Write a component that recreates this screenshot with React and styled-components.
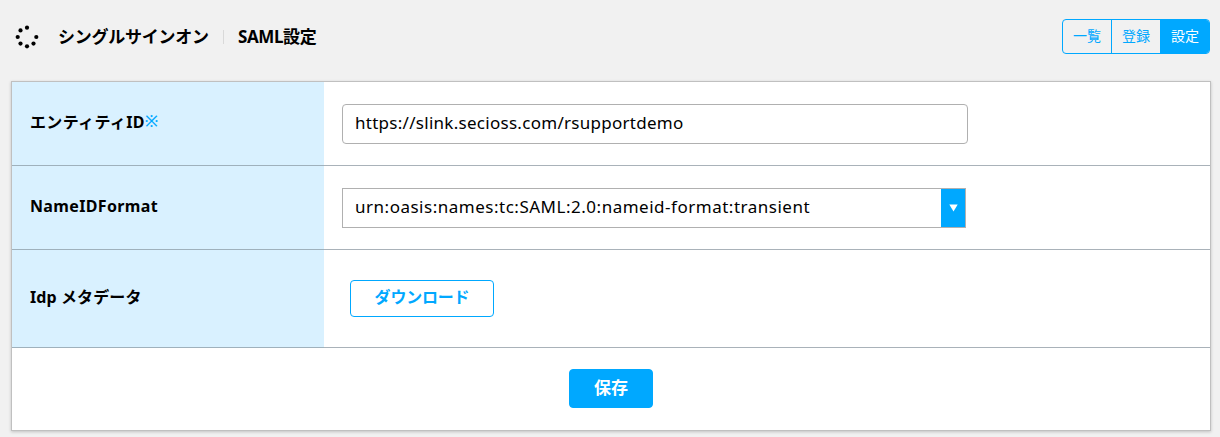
import React from 'react';
import styled, { createGlobalStyle } from 'styled-components';

const GlobalStyle = createGlobalStyle`
  * {
    box-sizing: border-box;
  }

  body {
    margin: 0;
    background-color: #f1f1f1;
    color: #000;
    font-family: 'Noto Sans', 'Noto Sans CJK JP', sans-serif;
    font-size: 16px;
  }

  button, input {
    font-family: inherit;
  }
`;

const Page = styled.main`
  height: 437px;
  padding: 0 10px 0 12px;
  overflow: hidden;
`;

const Header = styled.header`
  height: 82px;
  padding-top: 19px;
  display: flex;
  align-items: flex-start;
  justify-content: space-between;
`;

const Breadcrumb = styled.div`
  height: 35px;
  display: flex;
  align-items: center;
`;

const Spinner = styled.svg`
  width: 24px;
  height: 24px;
  margin: 1px 19px 0 3px;
`;

const Crumb = styled.h1`
  margin: 0;
  width: ${({ $width }) => $width}px;
  font-size: 17px;
  line-height: 24px;
  font-weight: 700;
  letter-spacing: ${({ $spacing }) => $spacing || 0}px;
  white-space: nowrap;
`;

const Separator = styled.span`
  width: 1px;
  height: 14px;
  margin: 0 14px;
  background-color: #d9d9d9;
`;

const Tabs = styled.nav`
  display: flex;
  height: 35px;
  border: 1px solid #00a8ff;
  border-radius: 4px;
  overflow: hidden;
`;

const Tab = styled.button`
  width: 48px;
  padding: 0 0 4px;
  border: 0;
  background-color: ${({ $active }) => ($active ? '#00a8ff' : 'transparent')};
  color: ${({ $active }) => ($active ? '#fff' : '#00a8ff')};
  font-size: 14px;

  & + & {
    border-left: 1px solid #00a8ff;
    width: 49px;
  }
`;

const Panel = styled.form`
  background-color: #fff;
  box-shadow: 0 0 0 1px #c0c0c0, 0 1px 3px 1px rgba(0, 0, 0, 0.2);
`;

const Row = styled.div`
  display: grid;
  grid-template-columns: 312px 1fr;
  height: ${({ $height }) => $height}px;
`;

const Label = styled.label`
  padding: 0 0 ${({ $lift }) => $lift || 4}px 18px;
  display: flex;
  align-items: center;
  background-color: #d9f1ff;
  border-bottom: 1px solid #9fb1bc;
  font-weight: 700;
  letter-spacing: ${({ $spacing }) => $spacing || 0}px;
  white-space: pre;
`;

const Required = styled.span`
  color: #00a8ff;
  font-weight: 500;
  letter-spacing: 0;
`;

const Field = styled.div`
  padding: 0 0 0 ${({ $indent }) => $indent || 18}px;
  display: flex;
  align-items: center;
  border-bottom: 1px solid #a9b2b9;
`;

const TextInput = styled.input`
  width: 626px;
  height: 40px;
  padding: 0 12px 3px;
  border: 1px solid #b0b0b0;
  border-radius: 4px;
  background-color: #fff;
  color: #000;
  font-size: 17px;
  letter-spacing: 0.28px;
  outline: none;
`;

const Select = styled.div`
  width: 624px;
  height: 40px;
  display: flex;
  justify-content: space-between;
  border: 1px solid #b0b0b0;
`;

const SelectValue = styled.span`
  padding-left: 12px;
  font-size: 17px;
  line-height: 35px;
  letter-spacing: 0.51px;
  white-space: nowrap;
`;

const SelectArrow = styled.span`
  width: 24px;
  display: flex;
  align-items: center;
  justify-content: center;
  background-color: #00a8ff;
`;

const Button = styled.button`
  border-radius: 4px;
  border: 1px solid #00a8ff;
  font-size: 16px;
  font-weight: 700;
`;

const DownloadButton = styled(Button)`
  width: 144px;
  height: 37px;
  padding: 0 0 5px;
  background-color: #fff;
  color: #00a8ff;
  letter-spacing: -0.2px;
`;

const SaveButton = styled(Button)`
  width: 84px;
  height: 39px;
  padding: 0 0 5px;
  background-color: #00a8ff;
  color: #fff;
  font-size: 17px;
`;

const Footer = styled.div`
  height: 82px;
  padding-top: 21px;
  display: flex;
  align-items: flex-start;
  justify-content: center;
`;

const dots = [
  [12, 2.7],
  [5.5, 5.4],
  [2.7, 12],
  [5.5, 18.6],
  [12, 21.3],
  [18.5, 18.6],
  [21.3, 12],
];

const tabs = ['一覧', '登録', '設定'];

const App = () => (
  <>
    <GlobalStyle />
    <Page>
      <Header>
        <Breadcrumb>
          <Spinner viewBox="0 0 24 24">
            {dots.map(([cx, cy]) => (
              <circle key={`${cx}-${cy}`} cx={cx} cy={cy} r="2.1" />
            ))}
          </Spinner>
          <Crumb $width={151} $spacing={-0.25}>シングルサインオン</Crumb>
          <Separator />
          <Crumb $width={80} $spacing={-0.4}>SAML設定</Crumb>
        </Breadcrumb>
        <Tabs>
          {tabs.map((tab) => (
            <Tab key={tab} type="button" $active={tab === '設定'}>{tab}</Tab>
          ))}
        </Tabs>
      </Header>
      <Panel>
        <Row $height={84}>
          <Label $spacing={0.35} $lift={6}>エンティティID<Required>※</Required></Label>
          <Field>
            <TextInput defaultValue="https://slink.secioss.com/rsupportdemo" />
          </Field>
        </Row>
        <Row $height={84}>
          <Label $spacing={0.35}>NameIDFormat</Label>
          <Field>
            <Select>
              <SelectValue>urn:oasis:names:tc:SAML:2.0:nameid-format:transient</SelectValue>
              <SelectArrow>
                <svg width="10" height="8" viewBox="0 0 10 8">
                  <path d="M1.3 0.5h8.4L5.5 7.5z" fill="#fff" />
                </svg>
              </SelectArrow>
            </Select>
          </Field>
        </Row>
        <Row $height={98}>
          <Label $spacing={0.1} $lift={6}>Idp メタデータ</Label>
          <Field $indent={26}>
            <DownloadButton type="button">ダウンロード</DownloadButton>
          </Field>
        </Row>
        <Footer>
          <SaveButton type="button">保存</SaveButton>
        </Footer>
      </Panel>
    </Page>
  </>
);

export default App;
